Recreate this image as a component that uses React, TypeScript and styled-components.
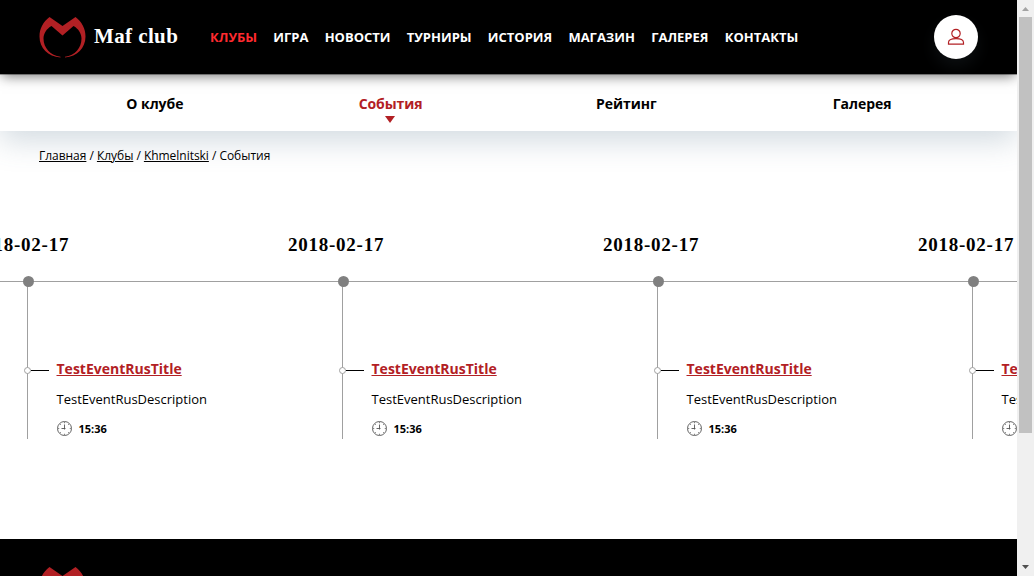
import React from 'react';
import styled, { createGlobalStyle } from 'styled-components';

const GlobalStyle = createGlobalStyle`
  * { box-sizing: border-box; }
  html, body { margin: 0; height: 576px; overflow: hidden; background: #fff; }
  body { font-family: 'Open Sans', 'Noto Sans', sans-serif; color: #000; }
`;

const Window = styled.div`
  display: flex;
  width: 1034px;
  height: 576px;
  overflow: hidden;
`;

const Page = styled.div`
  width: 1017px;
  height: 576px;
  overflow: hidden;
  display: flex;
  flex-direction: column;
`;

const Header = styled.header`
  position: relative;
  z-index: 3;
  flex: none;
  display: flex;
  align-items: center;
  height: 74px;
  padding: 0 39px;
  background: #000;
  box-shadow: 0 4px 12px -2px rgba(0, 0, 0, 0.55), 0 1px 0 rgba(0, 0, 0, 0.35);
`;

const Brand = styled.a`
  display: flex;
  align-items: center;
  width: 171px;
  color: #fff;
`;

const BrandName = styled.span`
  margin: -2px 0 0 8px;
  font: bold 21px/28px 'Liberation Serif', serif;
  letter-spacing: 0.4px;
  white-space: nowrap;
`;

const MainNav = styled.nav`
  display: flex;
  gap: 16.2px;
`;

const NavLink = styled.a<{ $active?: boolean }>`
  font-size: 13px;
  line-height: 18px;
  font-weight: 700;
  white-space: nowrap;
  color: ${(p) => (p.$active ? '#ff2a2f' : '#fff')};
`;

const UserButton = styled.button`
  display: flex;
  align-items: center;
  justify-content: center;
  width: 44px;
  height: 44px;
  margin-left: auto;
  padding: 0;
  border: 0;
  border-radius: 50%;
  background: #fff;
  box-shadow: 0 8px 16px rgba(96, 125, 139, 0.12);
`;

const SubNav = styled.nav`
  position: relative;
  z-index: 2;
  flex: none;
  display: grid;
  grid-template-columns: repeat(4, 1fr);
  height: 57px;
  padding: 20px 37px 0;
  background: #fff;
  box-shadow: 0 10px 30px rgba(80, 110, 135, 0.25);
`;

const SubLink = styled.a<{ $active?: boolean }>`
  display: flex;
  flex-direction: column;
  align-items: center;
  font-size: 14px;
  line-height: 20px;
  font-weight: 700;
  letter-spacing: -0.05px;
  color: ${(p) => (p.$active ? '#b22024' : '#000')};
`;

const Caret = styled.span`
  margin: 2px 1px 0 0;
  border: 5px solid transparent;
  border-top: 7px solid #b22024;
  border-bottom: 0;
`;

const Breadcrumbs = styled.div`
  position: relative;
  z-index: 3;
  flex: none;
  height: 50px;
  padding: 16px 39px 0;
  font-size: 12px;
  line-height: 17px;
  letter-spacing: -0.03px;
  white-space: nowrap;
`;

const Crumb = styled.a`
  text-decoration: underline;
`;

const Timeline = styled.main`
  flex: none;
  display: flex;
  height: 358px;
  margin-left: -27px;
  padding-top: 53px;
`;

const Event = styled.article`
  flex: none;
  width: 315px;
`;

const EventDate = styled.h2`
  margin: 0;
  height: 47px;
  font: bold 19px/22px 'Liberation Serif', serif;
  letter-spacing: 0.75px;
  white-space: nowrap;
`;

const Axis = styled.div`
  display: flex;
  align-items: center;
  height: 1px;
  padding-left: 50px;
  background: #a0a0a0;
`;

const Dot = styled.span`
  position: relative;
  z-index: 1;
  width: 11px;
  height: 11px;
  border-radius: 50%;
  background: #808080;
`;

const Details = styled.div`
  display: flex;
  height: 157px;
  margin-left: 54px;
  padding-top: 77px;
  border-left: 1px solid #a0a0a0;
`;

const Connector = styled.div`
  display: flex;
  align-items: center;
  height: 7px;
  width: 32.5px;
  margin: 8px 0 0 -4px;
`;

const Ring = styled.span`
  width: 7px;
  height: 7px;
  border: 1px solid #a0a0a0;
  border-radius: 50%;
  background: #fff;
`;

const Dash = styled.span`
  width: 18px;
  height: 1px;
  background: #000;
`;

const EventTitle = styled.a`
  display: block;
  font-size: 14px;
  line-height: 20px;
  font-weight: 700;
  text-decoration: underline;
  color: #b22024;
`;

const Description = styled.p`
  margin: 10px 0 0;
  font-size: 13px;
  line-height: 20px;
`;

const Time = styled.div`
  display: flex;
  align-items: center;
  gap: 7px;
  height: 20px;
  margin-top: 9px;
  font-size: 11px;
  font-weight: 700;
`;

const Footer = styled.footer`
  flex: none;
  height: 37px;
  overflow: hidden;
  padding: 28px 39px 0;
  background: #000;
`;

const Scrollbar = styled.div`
  display: flex;
  flex-direction: column;
  align-items: center;
  justify-content: space-between;
  width: 17px;
  height: 576px;
  padding: 7px 2px;
  background: #f0f0f0;
`;

const Thumb = styled.div`
  width: 13px;
  height: 416px;
  margin: 6px 0 auto;
  background: #c1c1c1;
`;

const Arrow = styled.svg`
  display: block;
  flex: none;
`;

const LogoMark = styled.svg`
  display: block;
  flex: none;
`;

const Logo = () => (
  <LogoMark width="47" height="41" viewBox="0 0 47 41">
    <path
      fill="#b22024"
      d="M10.500 0 23.500 9 36.500 0C43 5 46.500 11.500 46.500 19.500 46.500 31 38 39.500 26 40.500V39.800C36 38.500 42.500 31 42.500 21.500 42.500 17 39.500 11.500 34.500 9L23.500 18.500 12.500 9C7.500 11.500 4.500 17 4.500 21.500 4.500 31 11.500 38.500 21.500 39.800V40.500C9 39.500 .500 31 .500 19.500 .500 11.500 4 5 10.500 0Z"
    />
  </LogoMark>
);

const UserIcon = () => (
  <svg width="18" height="18" viewBox="0 0 18 18" fill="none" stroke="#b22024" strokeWidth="1.2">
    <circle cx="9" cy="5.500" r="4.200" />
    <path d="M1.500 16.200V14.500C1.500 12 4 10.600 9 10.600S16.500 12 16.500 14.500V16.200Z" />
  </svg>
);

const ClockIcon = () => (
  <svg width="15" height="15" viewBox="0 0 15 15" fill="none" stroke="#555" strokeWidth="0.9">
    <circle cx="7.500" cy="7.500" r="7" />
    <path d="M7.500 3.500V8.500M4.500 7.500H8.500M7.500 1.200v1M7.500 12.800v1M1.200 7.500h1M12.800 7.500h1M3 3l.7.700M12 3l-.7.700M3 12l.7-.7M12 12l-.7-.7" />
  </svg>
);

const sections = ['КЛУБЫ', 'ИГРА', 'НОВОСТИ', 'ТУРНИРЫ', 'ИСТОРИЯ', 'МАГАЗИН', 'ГАЛЕРЕЯ', 'КОНТАКТЫ'];
const clubPages = ['О клубе', 'События', 'Рейтинг', 'Галерея'];
const events = [1, 2, 3, 4].map((id) => ({
  id,
  date: '2018-02-17',
  title: 'TestEventRusTitle',
  description: 'TestEventRusDescription',
  time: '15:36',
}));

export default function App() {
  return (
    <Window>
      <GlobalStyle />
      <Page>
        <Header>
          <Brand>
            <Logo />
            <BrandName>Maf club</BrandName>
          </Brand>
          <MainNav>
            {sections.map((s) => (
              <NavLink key={s} $active={s === 'КЛУБЫ'}>{s}</NavLink>
            ))}
          </MainNav>
          <UserButton aria-label="Профиль"><UserIcon /></UserButton>
        </Header>
        <SubNav>
          {clubPages.map((p) => (
            <SubLink key={p} $active={p === 'События'}>
              {p}
              {p === 'События' && <Caret />}
            </SubLink>
          ))}
        </SubNav>
        <Breadcrumbs>
          <Crumb>Главная</Crumb> / <Crumb>Клубы</Crumb> / <Crumb>Khmelnitski</Crumb> / События
        </Breadcrumbs>
        <Timeline>
          {events.map((e) => (
            <Event key={e.id}>
              <EventDate>{e.date}</EventDate>
              <Axis><Dot /></Axis>
              <Details>
                <Connector><Ring /><Dash /></Connector>
                <div>
                  <EventTitle>{e.title}</EventTitle>
                  <Description>{e.description}</Description>
                  <Time><ClockIcon />{e.time}</Time>
                </div>
              </Details>
            </Event>
          ))}
        </Timeline>
        <Footer><Logo /></Footer>
      </Page>
      <Scrollbar>
        <Arrow width="7" height="4" viewBox="0 0 7 4"><path fill="#a3a3a3" d="M0 4 3.500 0 7 4Z" /></Arrow>
        <Thumb />
        <Arrow width="7" height="4" viewBox="0 0 7 4"><path fill="#505050" d="M0 0H7L3.500 4Z" /></Arrow>
      </Scrollbar>
    </Window>
  );
}
